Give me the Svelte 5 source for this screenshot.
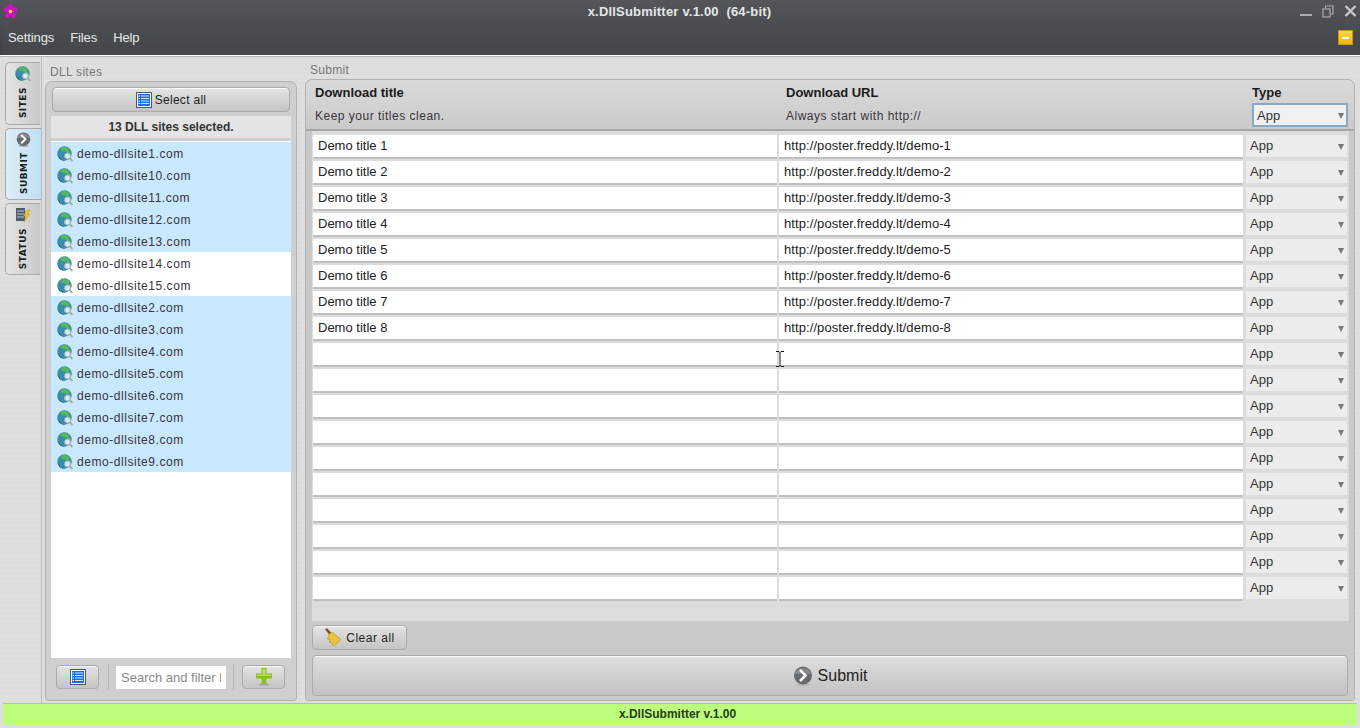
<script>
  const sites = [
    { name: 'demo-dllsite1.com', on: true },
    { name: 'demo-dllsite10.com', on: true },
    { name: 'demo-dllsite11.com', on: true },
    { name: 'demo-dllsite12.com', on: true },
    { name: 'demo-dllsite13.com', on: true },
    { name: 'demo-dllsite14.com', on: false },
    { name: 'demo-dllsite15.com', on: false },
    { name: 'demo-dllsite2.com', on: true },
    { name: 'demo-dllsite3.com', on: true },
    { name: 'demo-dllsite4.com', on: true },
    { name: 'demo-dllsite5.com', on: true },
    { name: 'demo-dllsite6.com', on: true },
    { name: 'demo-dllsite7.com', on: true },
    { name: 'demo-dllsite8.com', on: true },
    { name: 'demo-dllsite9.com', on: true },
  ]

  const rows = Array.from({ length: 18 }, (_, i) => i < 8
    ? { title: `Demo title ${i + 1}`, url: `http://poster.freddy.lt/demo-${i + 1}` }
    : { title: '', url: '' })

  const menus = ['Settings', 'Files', 'Help']
</script>

{#snippet globe(size)}
  <svg class="ico" width={size} height={size} viewBox="0 0 16 16">
    <circle cx="7.5" cy="7.5" r="7.2" fill="#3a8dab" />
    <path d="M3.500 2 8 .6l4.500 2.400-.7 2.800 2.400 1.700-2.700 2.500-2.300-1.500.5-2.800L6.500 5 4.500 5.200z" fill="#55b85c" />
    <path d="M.6 8.500c1.200 3.300 3.700 5.500 7.400 6.200C4.500 15.200.9 12.500.6 8.500z" fill="#1b5470" />
    <circle cx="10.500" cy="10" r="3" fill="#dbe9ee" stroke="#9ab0b8" stroke-width="1" />
    <path d="M12.700 12.200 15.300 14.800" stroke="#a3a394" stroke-width="1.800" />
  </svg>
{/snippet}

{#snippet arrow(size)}
  <svg class="ico" width={size} height={size} viewBox="0 0 20 20">
    <ellipse cx="10" cy="18.5" rx="7" ry="1.5" fill="#b4b4b4" />
    <circle cx="10" cy="9.5" r="9" fill="#666a6e" />
    <path d="M1.5 8a9 9 0 0 1 17 0z" fill="#85888b" />
    <path d="M7 4l5.5 5.500L7 15" fill="none" stroke="#fff" stroke-width="2.600" />
  </svg>
{/snippet}

{#snippet listIcon()}
  <svg class="ico" width="16" height="16" viewBox="0 0 16 16">
    <rect x=".5" y=".5" width="15" height="15" fill="#fff" stroke="#44597c" />
    <rect x="2" y="2" width="12" height="12" fill="#1a6fe0" />
    <path d="M5 4h8M5 6.500h8M5 9h8M5 11.500h8" stroke="#cfe3ff" stroke-width="1" />
    <path d="M2.500 4h1.500M2.500 6.500h1.500M2.500 9h1.500M2.500 11.500h1.500" stroke="#fff" stroke-width="1" />
  </svg>
{/snippet}

<div class="app">
  <header class="top">
    <div class="titlebar">
      <svg class="logo" width="15" height="15" viewBox="0 0 15 15">
        <g fill="#d012c0">
          <circle cx="7.500" cy="2.600" r="2.500" />
          <circle cx="12.200" cy="5.600" r="2.500" />
          <circle cx="10.500" cy="11.600" r="2.500" />
          <circle cx="4.500" cy="11.600" r="2.500" />
          <circle cx="2.800" cy="5.600" r="2.500" />
          <circle cx="7.500" cy="7.500" r="4" />
        </g>
        <circle cx="7.500" cy="7.500" r="1.800" fill="#f0dc30" />
      </svg>
      <span class="apptitle">x.DllSubmitter v.1.00&nbsp; (64-bit)</span>
      <div class="winbtns">
        <i class="w-min"></i>
        <svg width="12" height="13" viewBox="0 0 12 13" fill="none" stroke="#a9abad" stroke-width="1.200">
          <rect x="1" y="4" width="7" height="8" />
          <path d="M3.500 3.500V1h7.500v8H8.500" />
        </svg>
        <svg width="13" height="12" viewBox="0 0 13 12" stroke="#c6c8ca" stroke-width="2.400">
          <path d="M1.500 1l10 10M11.500 1l-10 10" />
        </svg>
      </div>
    </div>
    <div class="menubar">
      <nav>
        {#each menus as m}
          <span>{m}</span>
        {/each}
      </nav>
      <span class="collapse"><i></i></span>
    </div>
  </header>

  <main class="body">
    <div class="rail">
      <div class="tab sites">
        {@render globe(16)}
        <b>SITES</b>
      </div>
      <div class="tab submit active">
        {@render arrow(15)}
        <b>SUBMIT</b>
      </div>
      <div class="tab status">
        <svg class="ico" width="16" height="16" viewBox="0 0 16 16">
          <rect x="1" y="1" width="9" height="13" fill="#4a5d70" />
          <path d="M2 4h7M2 7h7M2 10h7" stroke="#b9c7d6" stroke-width="1.200" />
          <path d="M12 3 8.500 9H11l-2 6 6-7.500h-2.800L15 3z" fill="#f4c81e" stroke="#b58a10" stroke-width=".5" />
        </svg>
        <b>STATUS</b>
      </div>
    </div>

    <section class="left">
      <div class="cap">DLL sites</div>
      <div class="box leftbox">
        <button class="btn selectall">{@render listIcon()}<span>Select all</span></button>
        <div class="count">13 DLL sites selected.</div>
        <ul class="sites-list">
          {#each sites as s}
            <li class:on={s.on}>{@render globe(16)}<span>{s.name}</span></li>
          {/each}
        </ul>
        <div class="tools">
          <button class="btn small">{@render listIcon()}</button>
          <i class="sep"></i>
          <input class="search" placeholder="Search and filter list" />
          <i class="sep"></i>
          <button class="btn small">
            <svg width="16" height="18" viewBox="0 0 16 18">
              <ellipse cx="8" cy="16.500" rx="5" ry="1.300" fill="#a9a9a9" />
              <path d="M5.500 0h5v5.500H16v5h-5.500V16h-5v-5.500H0v-5h5.500z" fill="#8cc21e" />
              <path d="M6.500 1h3v5.500H15v1.500H1V6.500h5.500z" fill="#b5dc55" />
            </svg>
          </button>
        </div>
      </div>
    </section>

    <section class="right">
      <div class="cap">Submit</div>
      <div class="box rightbox">
        <div class="heads">
          <div class="h-title">
            <b>Download title</b>
            <span>Keep your titles clean.</span>
          </div>
          <div class="h-url">
            <b>Download URL</b>
            <span>Always start with http://</span>
          </div>
          <div class="h-type">
            <b>Type</b>
            <div class="sel focus">App<em></em></div>
          </div>
        </div>
        <div class="grid">
          {#each rows as r}
            <div class="row">
              <div class="cell">{r.title}</div>
              <div class="cell url">{r.url}</div>
              <div class="sel">App<em></em></div>
            </div>
          {/each}
          <svg class="ibeam" width="8" height="16" viewBox="0 0 8 16" fill="none" stroke="#111">
            <path d="M0 .5h3l1 1 1-1h3M4 1.500v13M0 15.500h3l1-1 1 1h3" />
          </svg>
        </div>
        <button class="btn clear">
          <svg width="19" height="19" viewBox="0 0 19 19">
            <path d="M1 1.500 3 0l4.500 5-2 2z" fill="#8a4f1e" />
            <path d="M5 6.500 8 4l9 7.500c-2 2-5 5-7.500 6.500L7 14 5.500 15l.5-3.500L3.500 11z" fill="#e6c53a" stroke="#b08f1c" stroke-width=".6" />
          </svg>
          <span>Clear all</span>
        </button>
        <button class="btn send">{@render arrow(20)}<span>Submit</span></button>
      </div>
    </section>
  </main>

  <footer class="statusbar">x.DllSubmitter v.1.00</footer>
</div>

<style>
  :global(body) {
    margin: 0;
    background: #dcdcdc;
    font-family: 'Liberation Sans', Arial, sans-serif;
    overflow: hidden;
  }

  .app {
    width: 1360px;
    height: 728px;
    display: flex;
    flex-direction: column;
    overflow: hidden;
    background: #dedede;
  }

  .top {
    height: 55px;
    flex: none;
    background: linear-gradient(#53565b, #3d4045);
  }
  .titlebar {
    height: 22px;
    display: flex;
    align-items: center;
    position: relative;
    padding: 0 3px;
  }
  .logo { flex: none; }
  .apptitle {
    position: absolute;
    left: 0;
    right: 0;
    text-align: center;
    font-size: 13px;
    font-weight: 700;
    letter-spacing: .2px;
    color: #e6e6e6;
    top: 4px;
    padding-right: 1px;
    box-sizing: border-box;
  }
  .winbtns {
    margin-left: auto;
    display: flex;
    align-items: center;
    gap: 10px;
  }
  .w-min {
    width: 12px;
    height: 2px;
    background: #a9abad;
    margin-top: 8px;
  }

  .menubar {
    height: 33px;
    display: flex;
    align-items: center;
    background: linear-gradient(#4a4d52, #43464b);
    margin-left: 3px;
    border-radius: 4px 0 0 0;
    padding: 0 7px 2px 5px;
    box-sizing: border-box;
    justify-content: space-between;
  }
  .menubar nav { display: flex; gap: 16px; }
  .menubar nav span { font-size: 13px; color: #e8eaea; letter-spacing: -.1px; }
  .collapse {
    width: 15px;
    height: 15px;
    box-sizing: border-box;
    background: linear-gradient(#fbd94e, #f0b400);
    border: 1px solid #c99500;
    display: flex;
    align-items: center;
    justify-content: center;
  }
  .collapse i { width: 7px; height: 2px; background: #fff; }

  .body {
    flex: 1;
    min-height: 0;
    display: flex;
    border-top: 1px solid #fff;
    box-shadow: inset 0 1px 0 #b4b4b4;
    background: repeating-linear-gradient(0deg, #dedede 0 2px, #e0e0e0 2px 3px, #dddddd 3px 5px);
    padding-left: 5px;
  }

  .rail {
    width: 36px;
    flex: none;
    padding-top: 6px;
    display: flex;
    flex-direction: column;
    gap: 3px;
    border-right: 1px solid #b9b9b9;
    height: 641px;
  }
  .tab {
    width: 35px;
    box-sizing: border-box;
    border: 1px solid #a9a9a9;
    border-right: 0;
    border-radius: 5px 0 0 5px;
    display: flex;
    flex-direction: column;
    align-items: center;
    background: linear-gradient(90deg, #e4e4e4, #c9c9c9);
    padding-top: 3px;
  }
  .tab.sites { height: 63px; }
  .tab.submit {
    height: 72px;
    background: linear-gradient(90deg, #dcedf8, #c0e1f7);
    width: 36px;
    margin-right: -1px;
  }
  .tab.status { height: 72px; }
  .tab b {
    writing-mode: vertical-rl;
    transform: rotate(180deg);
    font-family: 'DejaVu Sans', sans-serif;
    font-size: 9px;
    font-weight: 700;
    color: #1d1d1d;
    letter-spacing: .5px;
    margin-top: 5px;
  }
  .ico { flex: none; display: block; }

  .cap {
    font-size: 12px;
    color: #777;
    letter-spacing: .3px;
  }
  .box {
    border: 1px solid #b3b3b3;
    border-radius: 7px 7px 3px 3px;
    box-sizing: border-box;
    background: #cfcfcf;
  }

  .left {
    width: 252px;
    flex: none;
    margin-left: 3px;
    padding-top: 9px;
    display: flex;
    flex-direction: column;
  }
  .left .cap { height: 16px; padding-left: 5px; line-height: 14px; }
  .leftbox {
    height: 620px;
    display: flex;
    flex-direction: column;
    padding: 5px 5px 0;
  }

  .btn {
    font: inherit;
    color: #222;
    border: 1px solid #aaa;
    border-radius: 4px;
    background: linear-gradient(#e4e4e4, #c4c4c4);
    box-shadow: inset 0 1px 0 #f7f7f7;
    display: flex;
    align-items: center;
    justify-content: center;
    padding: 0;
  }

  .selectall {
    height: 25px;
    margin: 0 1px;
    gap: 3px;
    font-size: 12px;
    letter-spacing: .3px;
  }
  .count {
    height: 22px;
    margin-top: 4px;
    background: #e4e4e4;
    font-size: 12px;
    font-weight: 700;
    color: #333;
    text-align: center;
    line-height: 23px;
  }
  .sites-list {
    list-style: none;
    margin: 3px 0 0;
    padding: 1px 0 0;
    height: 516px;
    background: #fff;
  }
  .sites-list li {
    height: 22px;
    box-sizing: border-box;
    padding: 2px 0 0 6px;
    display: flex;
    align-items: center;
    gap: 4px;
    font-size: 12px;
    color: #3a3340;
    letter-spacing: .55px;
  }
  .sites-list li.on { background: #c8e8fd; }

  .tools {
    display: flex;
    align-items: center;
    height: 41px;
    padding: 0 5px 3px;
    box-sizing: border-box;
  }
  .small { width: 43px; height: 24px; flex: none; }
  .sep { width: 1px; height: 26px; background: #b8b8b8; flex: none; }
  .tools .sep:nth-child(2) { margin: 0 7px 0 9px; }
  .tools .sep:nth-child(4) { margin: 0 8px 0 7px; }
  .search {
    width: 110px;
    height: 23px;
    box-sizing: border-box;
    border: 0;
    background: #fff;
    padding: 0 5px;
    font: 13px 'Liberation Sans', Arial, sans-serif;
    flex: none;
  }
  .search::placeholder { color: #888; opacity: 1; }

  .right {
    width: 1050px;
    flex: none;
    margin-left: 8px;
    padding-top: 7px;
    display: flex;
    flex-direction: column;
  }
  .right .cap { height: 16px; padding-left: 5px; line-height: 14px; }
  .rightbox {
    height: 622px;
    padding: 0 6px;
    background: #c9c9c9;
  }

  .heads {
    height: 51px;
    display: flex;
    margin: 0 -6px;
    padding: 0 6px;
    border-radius: 7px 7px 0 0;
    background: linear-gradient(#dadada, #cacaca);
    font-size: 12px;
    color: #222;
    border-bottom: 2px solid #a6a6a6;
    box-sizing: border-box;
  }
  .heads b { display: block; font-size: 13px; font-weight: 700; color: #1b1b1b; }
  .heads span { display: block; margin-top: 9px; font-size: 12px; color: #3a3340; letter-spacing: .5px; }
  .h-title { width: 475px; padding: 5px 0 0 3px; box-sizing: border-box; }
  .h-url { width: 467px; padding-top: 5px; box-sizing: border-box; }
  .h-type { padding-top: 5px; }

  .sel {
    width: 101px;
    height: 22px;
    box-sizing: border-box;
    background: #ececec;
    font-size: 13px;
    color: #333;
    padding-left: 4px;
    line-height: 22px;
    position: relative;
  }
  .sel em {
    position: absolute;
    right: 3px;
    top: 9px;
    border: 3.500px solid transparent;
    border-top: 6px solid #777;
    border-bottom: 0;
  }
  .sel.focus {
    width: 96px;
    height: 24px;
    margin-top: 3px;
    border: 2px solid #86a9c8;
    padding-left: 3px;
    background: #f0f0f0;
    line-height: 21px;
  }
  .sel.focus em { top: 8px; right: 2px; }

  .grid {
    position: relative;
    padding: 4px 0 0 1px;
    height: 490px;
    box-sizing: border-box;
    background: #dcdcdc;
    margin-right: -1px;
  }
  .row {
    display: grid;
    grid-template-columns: 464px 464px 101px;
    column-gap: 2px;
    height: 26px;
    align-items: start;
  }
  .row .sel { margin-left: 1px; }
  .cell {
    height: 22px;
    background: #fff;
    font-size: 13px;
    line-height: 22px;
    padding-left: 5px;
    color: #222;
    box-shadow: 0 2px 0 #c0c0c0;
  }
  .cell.url { letter-spacing: .08px; }

  .ibeam { position: absolute; left: 464px; top: 220px; }

  .clear {
    width: 95px;
    height: 25px;
    margin-top: 4px;
    gap: 3px;
    font-size: 12px;
    letter-spacing: .5px;
  }
  .send {
    width: 1036px;
    height: 41px;
    margin-top: 5px;
    gap: 5px;
    font-size: 16px;
    background: linear-gradient(#dedede, #c2c2c2);
  }

  .statusbar {
    height: 22px;
    margin: 0 3px 3px;
    padding-right: 5px;
    flex: none;
    background: #bcff7c;
    border-top: 1px solid #a0d868;
    box-sizing: border-box;
    text-align: center;
    font-size: 12px;
    font-weight: 700;
    color: #2a3a1a;
    line-height: 21px;
  }
</style>
